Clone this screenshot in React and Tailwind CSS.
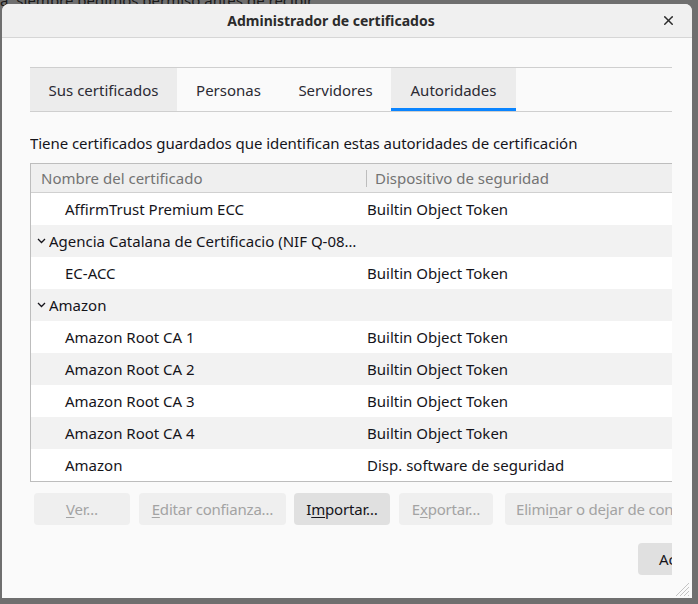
import { X } from 'lucide-react';

const tabs = [
  { label: 'Sus certificados', w: 'w-[147px]', cls: 'bg-[#ececec]' },
  { label: 'Personas', w: 'w-[103px]', cls: '' },
  { label: 'Servidores', w: 'w-[111px]', cls: '' },
  { label: 'Autoridades', w: 'w-[125px]', cls: 'bg-[#ececec] border-b-[3px] border-[#0a84ff]', active: true },
];

const rows = [
  { name: 'AffirmTrust Premium ECC', device: 'Builtin Object Token' },
  { name: 'Agencia Catalana de Certificacio (NIF Q-0801176-I)', group: true },
  { name: 'EC-ACC', device: 'Builtin Object Token' },
  { name: 'Amazon', group: true },
  { name: 'Amazon Root CA 1', device: 'Builtin Object Token' },
  { name: 'Amazon Root CA 2', device: 'Builtin Object Token' },
  { name: 'Amazon Root CA 3', device: 'Builtin Object Token' },
  { name: 'Amazon Root CA 4', device: 'Builtin Object Token' },
  { name: 'Amazon', device: 'Disp. software de seguridad' },
];

const Chevron = () => (
  <svg width="9" height="6" viewBox="0 0 9 6" className="shrink-0" aria-hidden="true">
    <path d="M1 1l3.5 3.5L8 1" fill="none" stroke="#15141a" strokeWidth="1.3" />
  </svg>
);

/* access key underline */
const Btn = ({ pre, key_, post, w, enabled, left }) => (
  <button
    className={`h-[32px] ${w} shrink-0 rounded-[4px] text-[15px] tracking-[-0.2px] whitespace-nowrap overflow-hidden ${
      left ? 'text-left pl-[11px]' : ''
    } ${enabled ? 'bg-[#e0e0e0] text-[#15141a]' : 'bg-[#efefef] text-[#a3a3a3]'}`}
  >
    {pre}<span className="underline underline-offset-2">{key_}</span>{post}
  </button>
);

export default function App() {
  return (
    <div
      className="relative w-[698px] h-[604px] overflow-hidden bg-[#6f6f6f]"
      style={{ fontFamily: '"Noto Sans", sans-serif' }}
    >
      {/* page behind the dialog */}
      <div className="absolute left-0 top-[-11px] text-[15px] text-[#1a1a1a] whitespace-nowrap">
        a, siempre pedimos permiso antes de recibir
      </div>

      {/* ── Dialog window ── */}
      <div className="absolute left-[2px] top-[4px] w-[690px] h-[594px] rounded-t-[7px] bg-[#fafafa] flex flex-col overflow-hidden">
        {/* Title bar */}
        <div className="relative h-[34px] shrink-0 bg-[#f0f0f0] border-b border-[#d6d6d6] flex items-center justify-center">
          <span className="text-[14px] font-bold text-[#2b2b2b] ml-[-32px]">Administrador de certificados</span>
          <X size={15} strokeWidth={2.4} className="absolute right-[16px] top-[9px] text-[#2b2b2b]" />
        </div>

        {/* Content, clipped on the right */}
        <div className="ml-[28px] w-[642px] overflow-hidden flex flex-col text-[#15141a]">
          {/* Tabs */}
          <div className="mt-[29px] flex border-t border-b border-[#cfcfcf] h-[45px]">
            {tabs.map((t) => (
              <div
                key={t.label}
                className={`${t.w} flex items-center justify-center text-[15px] text-[#2b2a33] pt-[2px] ${t.cls} ${t.active ? 'pt-[5px]' : ''}`}
              >
                {t.label}
              </div>
            ))}
          </div>

          <p className="mt-[20px] text-[15px] leading-[22px] tracking-[-0.06px] whitespace-nowrap">
            Tiene certificados guardados que identifican estas autoridades de certificación
          </p>

          {/* Tree table */}
          <div className="mt-[9px] w-[660px] border border-[#bdbdbd] bg-white">
            <div className="h-[29px] flex items-center bg-[#efefef] border-b border-[#d0d0d0] text-[15px] text-[#737373]">
              <div className="w-[335px] pl-[10px] whitespace-nowrap">Nombre del certificado</div>
              <div className="h-[17px] w-px bg-[#bdbdbd]" />
              <div className="pl-[8px] whitespace-nowrap">Dispositivo de seguridad</div>
            </div>
            {rows.map((r, i) => (
              <div
                key={i}
                className={`h-[32px] flex items-center text-[15px] ${i % 2 ? 'bg-[#f2f2f2]' : 'bg-white'}`}
              >
                {r.group ? (
                  <div className="w-[335px] pl-[6px] pr-[8px] flex items-center gap-[3px] whitespace-nowrap overflow-hidden">
                    <Chevron />
                    <span className="truncate">{r.name}</span>
                  </div>
                ) : (
                  <div className="w-[335px] pl-[34px] whitespace-nowrap overflow-hidden">{r.name}</div>
                )}
                <div className="pl-[1px] whitespace-nowrap">{r.device}</div>
              </div>
            ))}
          </div>

          {/* Action buttons */}
          <div className="mt-[11px] flex pl-[4px]">
            <Btn pre="" key_="V" post="er…" w="w-[96px]" />
            <div className="w-[9px] shrink-0" />
            <Btn pre="" key_="E" post="ditar confianza…" w="w-[147px]" />
            <div className="w-[8px] shrink-0" />
            <Btn pre="I" key_="m" post="portar…" w="w-[96px]" enabled />
            <div className="w-[9px] shrink-0" />
            <Btn pre="E" key_="x" post="portar…" w="w-[94px]" />
            <div className="w-[12px] shrink-0" />
            <Btn pre="Elimi" key_="n" post="ar o dejar de confiar…" w="w-[230px]" left />
          </div>

          {/* Dialog buttons */}
          <div className="mt-[18px] flex pl-[608px]">
            <button className="h-[32px] w-[96px] shrink-0 rounded-[4px] bg-[#e0e0e0] text-[15px] text-[#15141a] text-left pl-[21px]">
              Aceptar
            </button>
          </div>
        </div>

        {/* Resize grip */}
        <svg width="14" height="14" viewBox="0 0 14 14" className="absolute right-[2px] bottom-[1px]" aria-hidden="true">
          <path d="M13 4L4 13M13 8L8 13M13 12L12 13M13 0L0 13" stroke="#c4c4c4" strokeWidth="1" />
        </svg>
      </div>
    </div>
  );
}
